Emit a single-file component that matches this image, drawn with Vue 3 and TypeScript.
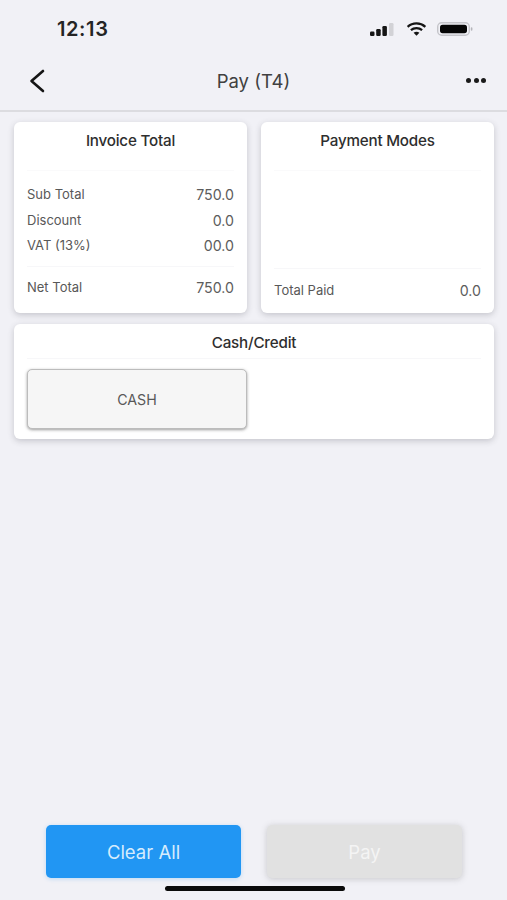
<script setup lang="ts">
const rows = [
  { label: 'Sub Total', value: '750.0' },
  { label: 'Discount', value: '0.0' },
  { label: 'VAT (13%)', value: '00.0' },
]
</script>

<template>
  <div class="page">
    <div class="status">
      <span class="time">12:13</span>
      <div class="status-icons">
        <svg class="signal" width="24" height="13" viewBox="0 0 24 13">
          <rect x="0" y="8.5" width="4.5" height="4.5" rx="1.2" fill="#151515" />
          <rect x="6.2" y="6" width="4.5" height="7" rx="1.2" fill="#151515" />
          <rect x="12.4" y="3" width="4.5" height="10" rx="1.2" fill="#151515" />
          <rect x="19" y="0" width="4.5" height="13" rx="1.2" fill="#d2d2d6" />
        </svg>
        <svg class="wifi" width="21" height="14" viewBox="0 0 22 15" fill="none" stroke="#151515" stroke-width="2.4">
          <path d="M1.5 5.2C6.8 0.4 15.2 0.4 20.5 5.2" />
          <path d="M5 8.8C8.4 5.8 13.6 5.8 17 8.8" />
          <path d="M11 14.6L7.9 11.6C9.7 10.2 12.3 10.2 14.1 11.6Z" fill="#151515" stroke="none" />
        </svg>
        <svg width="36" height="14" viewBox="0 0 36 14">
          <rect x="0.7" y="0.7" width="31.6" height="12.6" rx="4" fill="none" stroke="#c4c4c9" stroke-width="1.4" />
          <rect x="3" y="2.8" width="27" height="8.4" rx="2.6" fill="#050505" />
          <rect x="33.8" y="5.2" width="1.6" height="3.6" rx="0.8" fill="#b5b5ba" />
        </svg>
      </div>
    </div>

    <header class="nav">
      <svg class="back" width="18" height="24" viewBox="0 0 18 24" fill="none" stroke="#151515" stroke-width="2.6" stroke-linecap="round" stroke-linejoin="round">
        <path d="M15 2L3.5 12L15 22" />
      </svg>
      <h1 class="nav-title">Pay (T4)</h1>
      <div class="dots"><i></i><i></i><i></i></div>
    </header>

    <main class="content">
      <div class="top-grid">
        <section class="card">
          <h2 class="card-title">Invoice Total</h2>
          <div class="rule first"></div>
          <div class="rows">
            <div v-for="r in rows" :key="r.label" class="row">
              <span>{{ r.label }}</span><span class="val">{{ r.value }}</span>
            </div>
          </div>
          <div class="rule"></div>
          <div class="row net"><span>Net Total</span><span class="val">750.0</span></div>
        </section>

        <section class="card">
          <h2 class="card-title">Payment Modes</h2>
          <div class="rule first"></div>
          <div class="spacer"></div>
          <div class="rule"></div>
          <div class="row paid"><span>Total Paid</span><span class="val">0.0</span></div>
        </section>
      </div>

      <section class="card cash-card">
        <h2 class="card-title short">Cash/Credit</h2>
        <div class="rule"></div>
        <div class="cash-grid">
          <button class="cash-btn" type="button">CASH</button>
        </div>
      </section>
    </main>

    <footer class="actions">
      <button class="action clear" type="button">Clear All</button>
      <button class="action pay" type="button">Pay</button>
    </footer>

    <div class="home"></div>
  </div>
</template>

<style>
html, body { margin: 0; background: #f1f1f6; }
</style>

<style scoped>
.page {
  position: relative;
  width: 507px;
  height: 900px;
  overflow: hidden;
  background: #f1f1f6;
  display: flex;
  flex-direction: column;
  font-family: Inter, "Liberation Sans", sans-serif;
  color: #4a4a4a;
}
.status {
  height: 56px;
  flex: none;
  display: flex;
  justify-content: space-between;
  align-items: center;
  padding: 2px 34px 0 57px;
  box-sizing: border-box;
}
.time { font-size: 20px; font-weight: 600; color: #242424; letter-spacing: 0.6px; }
.status-icons { display: flex; align-items: center; }
.wifi { margin: 0 10px 0 12px; }
.signal, .wifi { display: block; }
.nav {
  height: 56px;
  flex: none;
  display: flex;
  align-items: center;
  justify-content: space-between;
  padding: 0 21px 5px 28px;
  box-sizing: border-box;
  border-bottom: 2px solid #dcdce0;
  position: relative;
}
.back { display: block; }
.nav-title {
  position: absolute;
  left: 0;
  right: 0;
  top: 14px;
  margin: 0;
  text-align: center;
  font-size: 18.5px;
  line-height: 22px;
  font-weight: 400;
  color: #404040;
}
.dots { display: flex; gap: 2.5px; }
.dots i { width: 5px; height: 5px; border-radius: 50%; background: #1a1a1a; display: block; }
.content {
  padding: 10px 13px 0 14px;
  display: flex;
  flex-direction: column;
  gap: 11px;
}
.top-grid {
  display: grid;
  grid-template-columns: 233px 233px;
  gap: 14px;
}
.card {
  background: #fff;
  border-radius: 6px;
  box-shadow: 0 2px 6px rgba(60, 60, 70, 0.24);
  height: 191px;
  padding: 0 13px;
  box-sizing: border-box;
  display: flex;
  flex-direction: column;
}
.card-title {
  margin: 0;
  height: 38px;
  line-height: 38px;
  text-align: center;
  font-size: 15.2px;
  font-weight: 500;
  color: #2e2e2e;
  letter-spacing: -0.2px;
}
.rule { height: 1px; background: #f7f7f9; flex: none; }
.first { margin-top: 10px; background: #fafafb; }
.rows {
  display: flex;
  flex-direction: column;
  height: 95px;
  padding-top: 11px;
  box-sizing: border-box;
}
.row {
  display: flex;
  justify-content: space-between;
  font-size: 13px;
  line-height: 25.5px;
  color: #585858;
}
.val { font-size: 14.2px; color: #5c5c5c; }
.net { margin-top: 8px; }
.spacer { height: 97px; flex: none; }
.paid { margin-top: 9px; }
.cash-card { height: 115px; }
.short { height: 34px; line-height: 38px; }
.cash-grid { padding-top: 10px; }
.cash-btn {
  display: block;
  width: 220px;
  height: 60px;
  padding: 0;
  background: #f6f6f6;
  border: 1px solid #bcbcbc;
  border-radius: 5px;
  box-shadow: 0 1px 3px rgba(60, 60, 60, 0.5);
  font-family: inherit;
  font-size: 14.2px;
  color: #585858;
}
.actions {
  margin-top: auto;
  margin-bottom: 22px;
  padding: 0 45px 0 46px;
  display: flex;
  justify-content: space-between;
}
.action {
  width: 195px;
  height: 53px;
  padding: 0;
  border: 0;
  border-radius: 5px;
  font-family: inherit;
  font-size: 18.5px;
}
.clear {
  background: #2196f3;
  color: #d6ecfd;
  box-shadow: 0 1px 4px rgba(33, 150, 243, 0.25);
}
.pay {
  background: #e1e1e1;
  color: #f4f4f4;
  box-shadow: 0 1px 6px rgba(90, 90, 90, 0.28);
}
.home {
  position: absolute;
  left: 165px;
  top: 886px;
  width: 180px;
  height: 5px;
  border-radius: 3px;
  background: #0a0a0a;
}
</style>
